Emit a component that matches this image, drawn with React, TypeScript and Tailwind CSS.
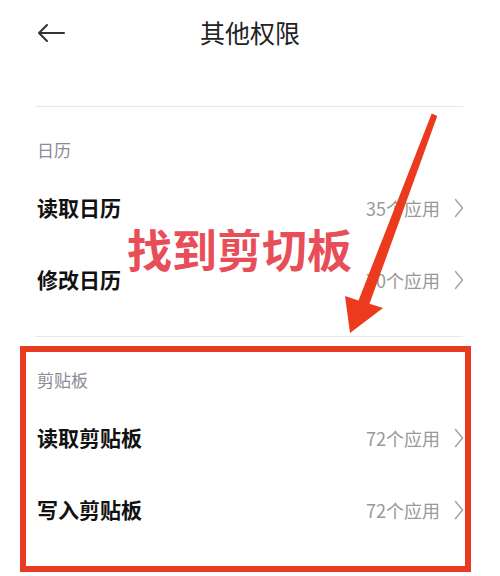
import React from "react";

const font = { fontFamily: '"Noto Sans CJK SC", "Noto Sans", sans-serif' };

function Chevron() {
  return (
    <svg width="10" height="20" viewBox="0 0 10 20" className="ml-[14px]">
      <path d="M1.5 1.5 L8.5 10 L1.5 18.5" fill="none" stroke="#a0a0a0" strokeWidth="1.4" strokeLinecap="round" strokeLinejoin="round" />
    </svg>
  );
}

function Row({ title, count }: { title: string; count: string }) {
  return (
    <div className="flex h-[72px] items-center justify-between">
      <span className="text-[21px] font-semibold text-[#111]">{title}</span>
      <div className="flex items-center">
        <span className="text-[18px] text-[#999]">{count}</span>
        <Chevron />
      </div>
    </div>
  );
}

function Section({ label, rows }: { label: string; rows: [string, string][] }) {
  return (
    <div>
      <div className="h-px bg-[#e8e8e8] ml-[35px] mr-[37px]" />
      <div className="pl-[37px] pr-[36px]">
        <div className="pt-[31px] pb-[10px] h-[65px]">
          <div className="h-[24px] flex items-center text-[17px] text-[#8b8b98]">{label}</div>
        </div>
        {rows.map(([t, c]) => (
          <Row key={t} title={t} count={c} />
        ))}
        <div className="h-[20px]" />
      </div>
    </div>
  );
}

export default function App() {
  return (
    <div className="relative w-[500px] h-[576px] overflow-hidden bg-white" style={font}>
      <div className="relative h-[66px] flex items-center justify-center">
        <svg width="30" height="20" viewBox="0 0 30 20" className="absolute left-[36px] top-[23px]">
          <path d="M28 10 H3 M11 2 L3 10 L11 18" fill="none" stroke="#333" strokeWidth="2" strokeLinecap="round" strokeLinejoin="round" />
        </svg>
        <span className="text-[25px] text-[#222]">其他权限</span>
      </div>
      <div className="h-[40px]" />
      <Section label="日历" rows={[["读取日历", "35个应用"], ["修改日历", "70个应用"]]} />
      <Section label="剪贴板" rows={[["读取剪贴板", "72个应用"], ["写入剪贴板", "72个应用"]]} />

      {/* annotations */}
      <div className="absolute left-[20px] top-[346px] w-[451px] h-[226px] border-[6px] border-[#e93b1f]" />
      <div className="absolute left-[127px] top-[219px] text-[45px] leading-[60px] font-bold text-[#e84e58] whitespace-nowrap">
        找到剪切板
      </div>
      <svg className="absolute left-0 top-0" width="500" height="576" viewBox="0 0 500 576">
        <polygon
          points="431.7,113.6 437.3,115.9 369.5,303.8 383,308 350,333 345,296 358.5,300.4"
          fill="#ec3a1e"
        />
      </svg>
    </div>
  );
}
